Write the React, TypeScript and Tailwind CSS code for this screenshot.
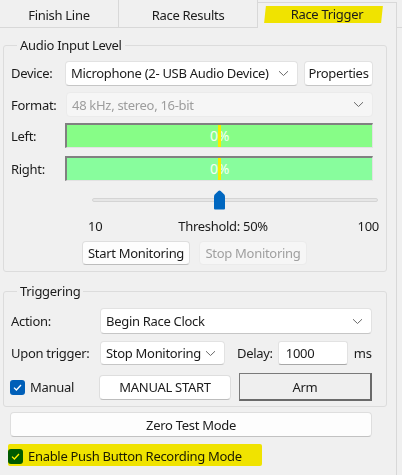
import React from "react";

const Chevron = () => (
  <svg width="11" height="7" viewBox="0 0 11 7" fill="none">
    <path d="M1 1.2 L5.5 5.5 L10 1.2" stroke="#6a6a6a" strokeWidth="1" />
  </svg>
);

const CheckBox = () => (
  <div className="w-[15px] h-[15px] rounded-[3px] bg-[#005fb8] flex items-center justify-center shrink-0">
    <svg width="11" height="11" viewBox="0 0 11 11" fill="none">
      <path d="M2 5.6 L4.4 8 L9 3" stroke="#ffffff" strokeWidth="1.3" />
    </svg>
  </div>
);

const Combo = ({ text, w, h = "h-[25px]", disabled = false }: { text: string; w: string; h?: string; disabled?: boolean }) => (
  <div
    className={`${w} ${h} flex items-center justify-between pl-[5px] pr-[8px] rounded-[4px] border ${
      disabled
        ? "bg-[#f6f6f6] border-[#ebebeb] text-[#9d9d9d]"
        : "bg-white border-[#e2e2e2] border-b-[#c6c6c6] text-[#1b1b1b]"
    }`}
  >
    <span className="whitespace-nowrap overflow-hidden">{text}</span>
    <Chevron />
  </div>
);

const LevelBar = ({ fill }: { fill: string }) => (
  <div className={`relative w-[308px] h-[25px] border-t-2 border-l-2 border-[#808080] border-b border-r border-b-[#e2e2e2] border-r-[#e2e2e2] ${fill} flex items-center justify-center`}>
    <span className="text-[#f4fff4] text-[14px]">0%</span>
    <div className="absolute left-[151px] top-0 bottom-0 w-[3px] bg-[#f4ef00]" />
  </div>
);

export default function App() {
  return (
    <div className="w-[402px] h-[475px] bg-[#f0f0f0] overflow-hidden font-['Noto_Sans',sans-serif] text-[13px] tracking-[-0.3px] text-[#1b1b1b] leading-[18px]">
      {/* tabs */}
      <div className="flex h-[28px]">
        <div className="w-[119px] border-r border-b border-[#d8d8d8] flex items-center justify-center pt-[3px]">Finish Line</div>
        <div className="w-[139px] border-r border-b border-[#d8d8d8] flex items-center justify-center pt-[3px]">Race Results</div>
        <div className="relative w-[139px] border-r border-t border-[#d8d8d8] mt-[2px] flex items-center justify-center pb-[3px]">
          <div className="absolute left-[7px] top-[3px] w-[117px] h-[17px] bg-[#fff200] mix-blend-multiply -skew-x-6" />
          <span className="relative">Race Trigger</span>
        </div>
        <div className="flex-1 border-b border-[#d8d8d8]" />
      </div>

      <div className="flex">
        <div className="w-[397px] h-[447px] border-r border-[#d8d8d8] pl-[3px]">
          {/* Audio Input Level */}
          <fieldset className="mt-[8px] w-[384px] border border-[#dcdcdc] rounded-[3px] pl-[7px] pb-[6px]">
            <legend className="ml-[6px] px-[3px] leading-[18px]">Audio Input Level</legend>

            <div className="flex items-center h-[26px] mt-[6px]">
              <span className="w-[54px]">Device:</span>
              <Combo text="Microphone (2- USB Audio Device)" w="w-[233px]" />
              <div className="ml-[6px] w-[69px] h-[25px] flex items-center justify-center bg-white border border-[#e2e2e2] border-b-[#c6c6c6] rounded-[4px]">Properties</div>
            </div>

            <div className="flex items-center h-[25px] mt-[6px]">
              <span className="w-[55px]">Format:</span>
              <Combo text="48 kHz, stereo, 16-bit" w="w-[307px]" disabled />
            </div>

            <div className="flex items-center mt-[6px]">
              <span className="w-[54px]">Left:</span>
              <LevelBar fill="bg-[#87fd87]" />
            </div>

            <div className="flex items-center mt-[8px]">
              <span className="w-[54px]">Right:</span>
              <LevelBar fill="bg-[#88fd9d]" />
            </div>

            <div className="relative ml-[81px] mt-[9px] h-[20px] w-[286px] flex items-center">
              <div className="w-full h-[4px] bg-[#e6e6e6] border border-[#d4d4d4] rounded-[2px]" />
              <svg className="absolute left-[121px] top-0" width="13" height="20" viewBox="0 0 13 20">
                <path d="M1 6.5 Q1 5.2 2 4.2 L5.3 1 Q6.5 0 7.7 1 L11 4.2 Q12 5.2 12 6.5 L12 18.5 Q12 19.5 11 19.5 L2 19.5 Q1 19.5 1 18.5 Z" fill="#0067c0" />
              </svg>
            </div>

            <div className="flex items-center h-[16px] mt-[8px] ml-[77px] w-[291px]">
              <span>10</span>
              <span className="ml-[76px]">Threshold: 50%</span>
              <span className="ml-auto">100</span>
            </div>

            <div className="flex items-center mt-[7px] ml-[71px]">
              <div className="w-[108px] h-[24px] flex items-center justify-center bg-[#fdfdfd] border border-[#dedede] border-b-[#bdbdbd] rounded-[4px]">Start Monitoring</div>
              <div className="ml-[9px] w-[108px] h-[24px] flex items-center justify-center bg-[#f6f6f6] border border-[#ebebeb] rounded-[4px] text-[#a0a0a0]">Stop Monitoring</div>
            </div>
          </fieldset>

          {/* Triggering */}
          <fieldset className="mt-[10px] w-[384px] border border-[#dcdcdc] rounded-[3px] pl-[7px] pb-[5px]">
            <legend className="ml-[6px] px-[3px] leading-[18px]">Triggering</legend>

            <div className="flex items-center h-[26px] mt-[8px]">
              <span className="w-[89px]">Action:</span>
              <Combo text="Begin Race Clock" w="w-[272px]" h="h-[26px]" />
            </div>

            <div className="flex items-center h-[24px] mt-[7px]">
              <span className="w-[89px]">Upon trigger:</span>
              <Combo text="Stop Monitoring" w="w-[125px]" h="h-[24px]" />
              <span className="ml-[12px]">Delay:</span>
              <div className="ml-[5px] w-[70px] h-[24px] flex items-center pl-[7px] bg-white border border-[#e2e2e2] border-b-[#a8a8a8] rounded-[3px]">1000</div>
              <span className="ml-[6px]">ms</span>
            </div>

            <div className="flex items-center h-[28px] mt-[8px]">
              <div className="w-[89px] -ml-[1px] flex items-center">
                <CheckBox />
                <span className="ml-[5px]">Manual</span>
              </div>
              <div className="w-[132px] h-[25px] flex items-center justify-center bg-white border border-[#dedede] border-b-[#bdbdbd] rounded-[4px]">MANUAL START</div>
              <div className="ml-[8px] w-[133px] h-[28px] flex items-center justify-center bg-[#efefef] border border-[#7a7a7a] border-r-2 border-b-2 border-r-[#6a6a6a] border-b-[#6a6a6a]">Arm</div>
            </div>
          </fieldset>

          <div className="ml-[7px] mt-[5px] w-[362px] h-[25px] flex items-center justify-center bg-[#fdfdfd] border border-[#dedede] border-b-[#c2c2c2] rounded-[4px]">Zero Test Mode</div>

          <div className="relative ml-[5px] mt-[11px] flex items-center h-[16px]">
            <CheckBox />
            <span className="ml-[5px]">Enable Push Button Recording Mode</span>
            <div className="absolute left-0 -top-[4px] w-[254px] h-[22px] bg-[#fff200] mix-blend-multiply rounded-[2px]" />
          </div>
        </div>
      </div>
    </div>
  );
}
